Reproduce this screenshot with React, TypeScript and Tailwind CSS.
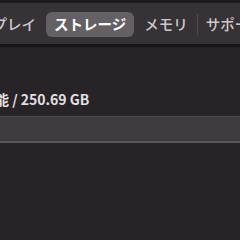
import React from 'react';

const font = { fontFamily: '"Noto Sans CJK JP", "Noto Sans", sans-serif' };

function App() {
  const tabs = ['ディスプレイ', 'ストレージ', 'メモリ', 'サポート', 'サービス'];
  const active = 'ストレージ';

  return (
    <div className="w-[240px] h-[240px] overflow-hidden bg-[#282327] flex flex-col" style={font}>
      <div className="h-[3px] bg-[#1d1a1d] shrink-0" />
      <div className="h-[41px] bg-[#363236] flex items-center pt-[2px] shrink-0 overflow-hidden">
        <div className="flex items-center -ml-[58px] gap-[2px] whitespace-nowrap">
          {tabs.map((t, i) => {
            const isActive = t === active;
            const next = tabs[i + 1];
            const showSep = next && !isActive && next !== active && i > 1;
            return (
              <React.Fragment key={t}>
                <div
                  className={`h-[25px] px-[8px] flex items-center rounded-[6px] text-[14.5px] leading-none ${
                    isActive ? 'bg-[#646064] text-white font-semibold' : 'text-[#cdcacd] font-medium'
                  }`}
                >
                  {t}
                </div>
                {showSep && <div className="w-px h-[21px] bg-[#4e4a4e] -ml-[1px] -mr-[2px]" />}
              </React.Fragment>
            );
          })}
        </div>
      </div>
      <div className="h-[3px] bg-[#161416] shrink-0" />
      <div className="flex-1 flex flex-col pt-[44px]">
        <div className="-ml-[47px] text-[14px] leading-[17px] font-bold text-[#e2e0e2] whitespace-nowrap">
          使用可能 / 250.69 GB
        </div>
        <div className="mt-[8px] h-[27px] bg-[#3e3a3d] border-t border-t-[#4c484b] border-b-2 border-b-[#5a565a]" />
      </div>
    </div>
  );
}

export default App;
